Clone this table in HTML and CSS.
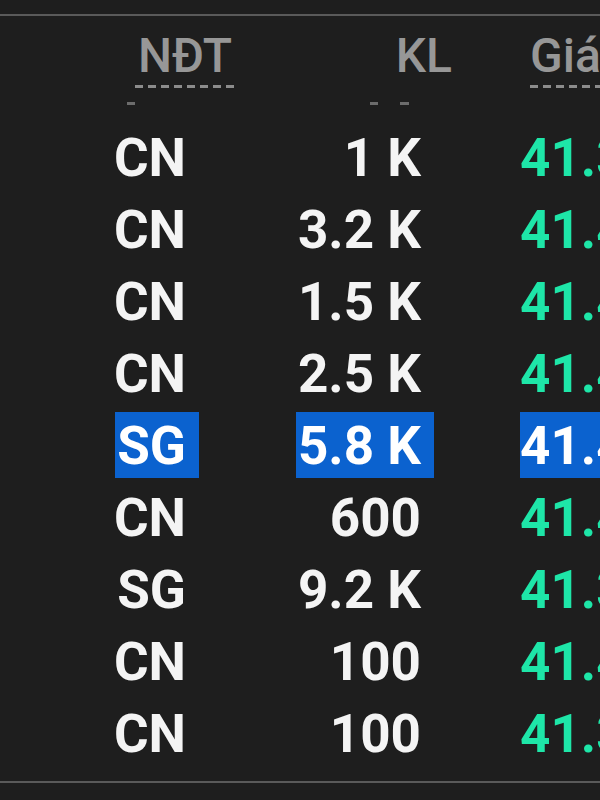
FILE: index.html
```html
<!DOCTYPE html>
<html lang="vi">
<head>
  <meta charset="UTF-8">
  <title>Khớp lệnh</title>
  <link rel="stylesheet" href="styles.css">
</head>
<body>
  <div class="board">
    <div class="head">
      <div class="h-ndt dash">NĐT</div>
      <div class="h-kl">KL</div>
      <div class="h-gia dash">Giá</div>
    </div>
    <div class="ghost">
      <span class="g1"></span>
      <span class="g2"></span>
      <span class="g3"></span>
    </div>
    <div class="rows">
      <div class="row"><div class="ndt">CN</div><div class="kl">1 K</div><div class="gia">41.35</div></div>
      <div class="row"><div class="ndt">CN</div><div class="kl">3.2 K</div><div class="gia">41.40</div></div>
      <div class="row"><div class="ndt">CN</div><div class="kl">1.5 K</div><div class="gia">41.40</div></div>
      <div class="row"><div class="ndt">CN</div><div class="kl">2.5 K</div><div class="gia">41.40</div></div>
      <div class="row"><div class="ndt"><span class="sel">SG</span></div><div class="kl"><span class="sel">5.8 K</span></div><div class="gia"><span class="sel">41.40</span></div></div>
      <div class="row"><div class="ndt">CN</div><div class="kl">600</div><div class="gia">41.40</div></div>
      <div class="row"><div class="ndt">SG</div><div class="kl">9.2 K</div><div class="gia">41.35</div></div>
      <div class="row"><div class="ndt">CN</div><div class="kl">100</div><div class="gia">41.40</div></div>
      <div class="row"><div class="ndt">CN</div><div class="kl">100</div><div class="gia">41.35</div></div>
    </div>
  </div>
</body>
</html>
```

FILE: styles.css
```css
html, body {
  margin: 0;
  background: #1e1e1e;
  overflow: hidden;
}

body {
  width: 600px;
  height: 800px;
  font-family: Roboto, "Liberation Sans", sans-serif;
}

.board {
  margin-top: 14px;
  border-top: 2px solid #5a5a5a;
  border-bottom: 2px solid #5a5a5a;
  padding-bottom: 11px;
}

/* header */
.head {
  display: flex;
  padding-left: 135px;
  margin-top: 12px;
  font-size: 48px;
  font-weight: 500;
  line-height: 56px;
  color: #979797;
  white-space: nowrap;
}

.head > div {
  flex-shrink: 0;
}

.dash {
  padding-bottom: 4px;
  background: repeating-linear-gradient(to right, #8c8c8c 0 8px, transparent 8px 13px) bottom left / 100% 3px no-repeat;
}

.h-ndt {
  width: 100px;
  text-align: center;
}

.h-kl {
  width: 217px;
  text-align: right;
}

.h-gia {
  margin-left: 78px;
  padding-right: 20px;
}

.ghost {
  display: flex;
  height: 3px;
  margin-top: 14px;
}

.ghost span {
  height: 3px;
  background: #6c6c6c;
}

.g1 { width: 8px; margin-left: 127px; }
.g2 { width: 8px; margin-left: 235px; }
.g3 { width: 9px; margin-left: 22px; }

/* rows */
.rows {
  margin-top: 17px;
}

.row {
  display: grid;
  grid-template-columns: 186px 235px auto;
  height: 72px;
  font-size: 53px;
  font-weight: 700;
  line-height: 72px;
  color: #f4f4f4;
  white-space: nowrap;
}

.ndt, .kl {
  text-align: right;
}

.gia {
  padding-left: 99px;
  color: #1ee6a8;
}

.sel {
  background: #0b62cf;
  color: #fff;
  padding: 3px 13px 1px 2px;
  margin: 0 -13px 0 -2px;
}

.gia .sel {
  padding-left: 0;
  margin-left: 0;
  padding-right: 40px;
}
```
